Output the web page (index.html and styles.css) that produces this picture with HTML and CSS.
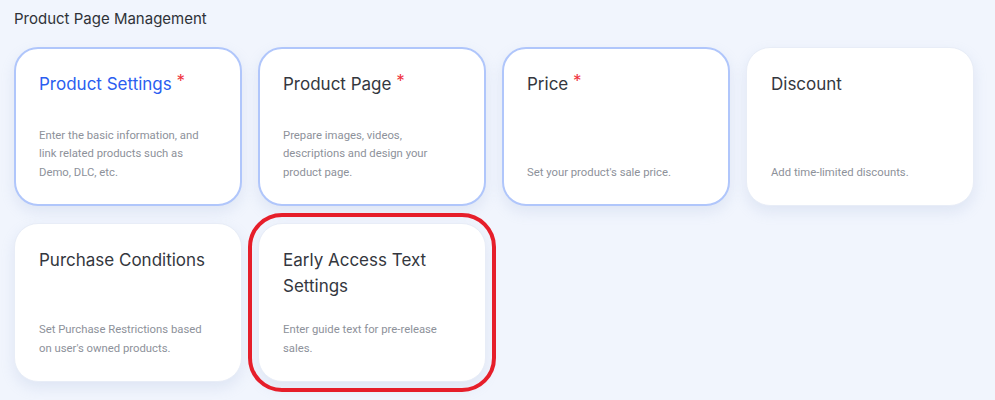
FILE: index.html
```html
<!DOCTYPE html>
<html>

<head>
    <meta charset="utf-8" />
    <title>Product Page Management</title>
    <link rel="stylesheet" href="styles.css">
</head>

<body>
    <div class="section">
        <div class="section-title">Product Page Management</div>

        <div class="cards">
            <div class="card card-required card-active">
                <div class="card-title">Product Settings <span class="star">*</span></div>
                <div class="card-desc">Enter the basic information, and link related products such as Demo, DLC, etc.</div>
            </div>
            <div class="card card-required">
                <div class="card-title">Product Page <span class="star">*</span></div>
                <div class="card-desc">Prepare images, videos, descriptions and design your product page.</div>
            </div>
            <div class="card card-required">
                <div class="card-title">Price <span class="star">*</span></div>
                <div class="card-desc">Set your product's sale price.</div>
            </div>
            <div class="card">
                <div class="card-title">Discount</div>
                <div class="card-desc">Add time-limited discounts.</div>
            </div>
            <div class="card">
                <div class="card-title">Purchase Conditions</div>
                <div class="card-desc">Set Purchase Restrictions based on user's owned products.</div>
            </div>
            <div class="card card-marked">
                <div class="card-title">Early Access Text Settings</div>
                <div class="card-desc">Enter guide text for pre-release sales.</div>
            </div>
        </div>
    </div>
</body>

</html>
```

FILE: styles.css
```css
body {
    margin: 0;
    background-color: #f1f5fd;
    font-family: 'Inter', 'Noto Sans', sans-serif;
    color: #33363d;
}

.section {
    padding: 9px 14px 18px 14px;
}

.section-title {
    font-size: 15px;
    line-height: 20px;
    color: #2f3238;
    margin-bottom: 18px;
}

.cards {
    display: grid;
    grid-template-columns: repeat(4, 228px);
    grid-auto-rows: 159px;
    column-gap: 16px;
    row-gap: 17px;
}

.card {
    box-sizing: border-box;
    display: flex;
    flex-direction: column;
    justify-content: space-between;
    background-color: #ffffff;
    border: 1px solid #e8edf7;
    border-radius: 24px;
    padding: 23px 24px 23px 24px;
    box-shadow: 0 6px 14px rgba(150, 170, 210, 0.2);
}

.card-required {
    border: 2px solid #b0c6fb;
    padding: 22px 23px 22px 23px;
}

.card-title {
    font-size: 17px;
    line-height: 26px;
    color: #34373e;
}

.card-active .card-title {
    color: #2b5ef0;
}

.star {
    color: #ef3340;
    font-size: 17px;
    vertical-align: 3px;
    line-height: 0;
}

.card-desc {
    font-family: 'Roboto', 'Inter', sans-serif;
    font-size: 11.3px;
    line-height: 18.5px;
    color: #8d919a;
}

.card-marked {
    outline: 4px solid #e61e2a;
    outline-offset: 6px;
}
```
